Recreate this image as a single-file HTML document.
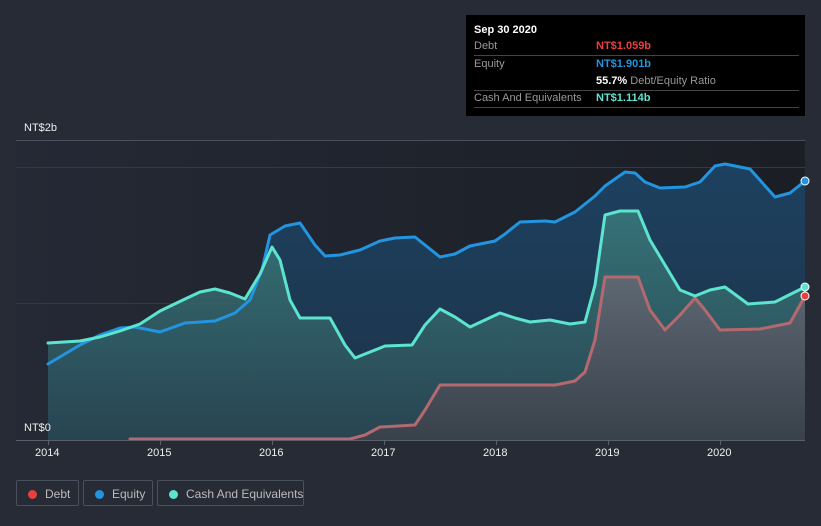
<!DOCTYPE html>
<html><head><style>
body{margin:0;background:#262b36;font-family:"Liberation Sans",sans-serif;}
.wrap{position:relative;width:821px;height:526px;overflow:hidden;background:#262b36}
.tt{position:absolute;left:466px;top:15px;width:339px;height:101px;background:#000;color:#fff;font-size:11px}
.tt .row{position:absolute;left:8px;right:6px;border-bottom:1px solid #444;height:17px;line-height:17px;color:#999;white-space:nowrap}
.lg{position:absolute;top:480px;height:26px;border:1px solid #4a505c;border-radius:2px;color:#bbb;font-size:12px;line-height:26px;box-sizing:border-box;white-space:nowrap}
.lg i{display:inline-block;width:9px;height:9px;border-radius:50%;margin:0 8px 0 11px;vertical-align:-1px}
.ax{position:absolute;color:#eee;font-size:11px}
</style></head><body><div class="wrap">
<svg width="821" height="526" style="position:absolute;left:0;top:0">
<defs>
<linearGradient id="bg" x1="0" y1="0" x2="1" y2="0"><stop offset="0" stop-color="#242935"/><stop offset="1" stop-color="#1b1e25"/></linearGradient>
<linearGradient id="eq" x1="0" y1="0" x2="0" y2="1"><stop offset="0" stop-color="#1d4160"/><stop offset="1" stop-color="#1d3247"/></linearGradient>
<linearGradient id="ca" x1="0" y1="0" x2="0" y2="1"><stop offset="0" stop-color="#3a7b7c"/><stop offset="1" stop-color="#2a4753"/></linearGradient>
<linearGradient id="de" x1="0" y1="0" x2="0" y2="1"><stop offset="0" stop-color="#5e6872"/><stop offset="1" stop-color="#39414b"/></linearGradient>
</defs>
<rect x="16" y="140" width="789" height="300" fill="url(#bg)"/>
<line x1="16" y1="140.5" x2="805" y2="140.5" stroke="#4a4f5a"/>
<line x1="16" y1="167.5" x2="805" y2="167.5" stroke="#343a45"/>
<line x1="16" y1="303.5" x2="805" y2="303.5" stroke="#343a45"/>
<polygon fill="url(#eq)" points="48,440 48,364 80,345 100,335 120,328 135,327 160,332 185,323 215,321 235,313 250,300 262,270 270,235 285,226 300,223 315,245 325,256 340,255 360,250 380,241 395,238 415,237 425,245 440,257 455,254 470,246 495,241 505,234 520,222 545,221 555,222 575,212 595,196 605,186 625,172 635,173 645,182 660,188 685,187 700,182 715,166 725,164 750,169 775,197 790,193 805,181 805,440"/>
<polygon fill="url(#ca)" opacity="0.85" points="48,440 48,343 80,341 100,337 120,331 140,324 160,311 185,299 200,292 215,289 230,293 245,299 260,274 272,247 280,260 290,300 300,318 330,318 345,345 355,358 370,352 385,346 412,345 425,325 440,309 455,317 470,327 485,320 500,313 515,318 530,322 550,320 570,324 585,322 595,285 605,215 620,211 638,211 650,240 665,265 680,290 695,296 710,290 725,287 748,304 775,302 805,287 805,440"/>
<polygon fill="url(#de)" points="130,440 130,439 350,439 365,435 380,427 415,425 425,410 440,385 555,385 575,381 585,372 595,340 605,277 638,277 650,310 665,330 680,315 695,298 705,310 720,330 760,329 790,323 805,296 805,440"/>
<g fill="none" stroke-width="3" stroke-linejoin="round" stroke-linecap="round">
<polyline stroke="#b4696e" points="130,439 350,439 365,435 380,427 415,425 425,410 440,385 555,385 575,381 585,372 595,340 605,277 638,277 650,310 665,330 680,315 695,298 705,310 720,330 760,329 790,323 805,296"/>
<polyline stroke="#2394df" points="48,364 80,345 100,335 120,328 135,327 160,332 185,323 215,321 235,313 250,300 262,270 270,235 285,226 300,223 315,245 325,256 340,255 360,250 380,241 395,238 415,237 425,245 440,257 455,254 470,246 495,241 505,234 520,222 545,221 555,222 575,212 595,196 605,186 625,172 635,173 645,182 660,188 685,187 700,182 715,166 725,164 750,169 775,197 790,193 805,181"/>
<polyline stroke="#5de4cf" points="48,343 80,341 100,337 120,331 140,324 160,311 185,299 200,292 215,289 230,293 245,299 260,274 272,247 280,260 290,300 300,318 330,318 345,345 355,358 370,352 385,346 412,345 425,325 440,309 455,317 470,327 485,320 500,313 515,318 530,322 550,320 570,324 585,322 595,285 605,215 620,211 638,211 650,240 665,265 680,290 695,296 710,290 725,287 748,304 775,302 805,287"/>
</g>
<circle cx="805" cy="181" r="4" fill="#2394df" stroke="#fff" stroke-width="1"/>
<circle cx="805" cy="287" r="4" fill="#5de4cf" stroke="#fff" stroke-width="1"/>
<circle cx="805" cy="296" r="4" fill="#e8403f" stroke="#fff" stroke-width="1"/>
<line x1="16" y1="440.5" x2="805" y2="440.5" stroke="#5a606b"/>
<g stroke="#5a606b"><line x1="48.5" y1="440" x2="48.5" y2="445"/><line x1="160.5" y1="440" x2="160.5" y2="445"/><line x1="272.5" y1="440" x2="272.5" y2="445"/><line x1="384.5" y1="440" x2="384.5" y2="445"/><line x1="496.5" y1="440" x2="496.5" y2="445"/><line x1="608.5" y1="440" x2="608.5" y2="445"/><line x1="720.5" y1="440" x2="720.5" y2="445"/></g>
</svg>
<div class="ax" style="left:24px;top:122px">NT$2b</div>
<div class="ax" style="left:24px;top:422px">NT$0</div>
<div class="ax" style="left:35px;top:447px">2014</div>
<div class="ax" style="left:147px;top:447px">2015</div>
<div class="ax" style="left:259px;top:447px">2016</div>
<div class="ax" style="left:371px;top:447px">2017</div>
<div class="ax" style="left:483px;top:447px">2018</div>
<div class="ax" style="left:595px;top:447px">2019</div>
<div class="ax" style="left:707px;top:447px">2020</div>
<div class="tt">
<div style="position:absolute;left:8px;top:9px;font-weight:bold">Sep 30 2020</div>
<div class="row" style="top:23px">Debt<span style="position:absolute;left:122px;color:#e8403f;font-weight:bold">NT$1.059b</span></div>
<div class="row" style="top:41px;border:none">Equity<span style="position:absolute;left:122px;color:#2394df;font-weight:bold">NT$1.901b</span></div>
<div class="row" style="top:58px"><span style="position:absolute;left:122px"><b style="color:#fff">55.7%</b> Debt/Equity Ratio</span></div>
<div class="row" style="top:75px">Cash And Equivalents<span style="position:absolute;left:122px;color:#5de4cf;font-weight:bold">NT$1.114b</span></div>
</div>
<div class="lg" style="left:16px;width:63px"><i style="background:#e8403f"></i>Debt</div>
<div class="lg" style="left:83px;width:70px"><i style="background:#2394df"></i>Equity</div>
<div class="lg" style="left:157px;width:147px"><i style="background:#5de4cf"></i>Cash And Equivalents</div>
</div></body></html>
